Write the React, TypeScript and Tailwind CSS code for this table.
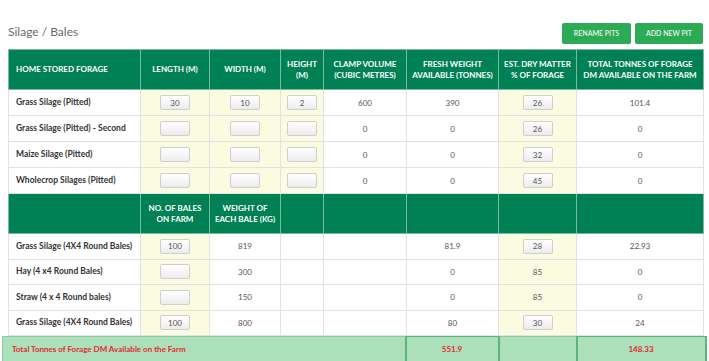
import React from "react"

const cols = [132, 69, 71, 43, 83, 92, 78, 127]

type Cell = { v?: string; input?: boolean; yellow?: boolean }

const pits: { label: string; cells: Cell[] }[] = [
  {
    label: "Grass Silage (Pitted)",
    cells: [
      { v: "30", input: true, yellow: true },
      { v: "10", input: true, yellow: true },
      { v: "2", input: true, yellow: true },
      { v: "600" },
      { v: "390" },
      { v: "26", input: true, yellow: true },
      { v: "101.4" },
    ],
  },
  {
    label: "Grass Silage (Pitted) - Second",
    cells: [
      { input: true, yellow: true },
      { input: true, yellow: true },
      { input: true, yellow: true },
      { v: "0" },
      { v: "0" },
      { v: "26", input: true, yellow: true },
      { v: "0" },
    ],
  },
  {
    label: "Maize Silage (Pitted)",
    cells: [
      { input: true, yellow: true },
      { input: true, yellow: true },
      { input: true, yellow: true },
      { v: "0" },
      { v: "0" },
      { v: "32", input: true, yellow: true },
      { v: "0" },
    ],
  },
  {
    label: "Wholecrop Silages (Pitted)",
    cells: [
      { input: true, yellow: true },
      { input: true, yellow: true },
      { input: true, yellow: true },
      { v: "0" },
      { v: "0" },
      { v: "45", input: true, yellow: true },
      { v: "0" },
    ],
  },
]

const bales: { label: string; cells: Cell[] }[] = [
  {
    label: "Grass Silage (4X4 Round Bales)",
    cells: [
      { v: "100", input: true, yellow: true },
      { v: "819" },
      {},
      {},
      { v: "81.9" },
      { v: "28", input: true, yellow: true },
      { v: "22.93" },
    ],
  },
  {
    label: "Hay (4 x4 Round Bales)",
    cells: [{ input: true, yellow: true }, { v: "300" }, {}, {}, { v: "0" }, { v: "85", yellow: true }, { v: "0" }],
  },
  {
    label: "Straw (4 x 4 Round bales)",
    cells: [{ input: true, yellow: true }, { v: "150" }, {}, {}, { v: "0" }, { v: "85", yellow: true }, { v: "0" }],
  },
  {
    label: "Grass Silage (4X4 Round Bales)",
    cells: [
      { v: "100", input: true, yellow: true },
      { v: "800" },
      {},
      {},
      { v: "80" },
      { v: "30", input: true, yellow: true },
      { v: "24" },
    ],
  },
]

function Box({ value }: { value?: string }) {
  return (
    <div className="mx-auto flex h-[15px] w-[30px] items-center justify-center rounded-[2px] border border-[#cfcfcf] bg-gradient-to-b from-white to-[#ececec] text-[8px] text-[#555]">
      {value}
    </div>
  )
}

function BodyRow({ label, cells, h }: { label: string; cells: Cell[]; h: string }) {
  return (
    <tr className={h}>
      <td className="border border-[#e2e2e2] bg-white pl-[7px] text-[8.5px] font-bold text-[#333]">{label}</td>
      {cells.map((c, i) => (
        <td
          key={i}
          className={`border border-[#e2e2e2] text-center text-[8px] text-[#555] ${c.yellow ? "bg-[#fbfbe1]" : "bg-white"}`}
        >
          {c.input ? <Box value={c.v} /> : c.v}
        </td>
      ))}
    </tr>
  )
}

function HeadCell({ children, left }: { children?: React.ReactNode; left?: boolean }) {
  return (
    <th
      className={`border border-[#7fb99a] bg-[#008055] px-1 text-[8px] font-bold leading-[11px] text-white ${left ? "pl-[7px] text-left" : "text-center"}`}
    >
      {children}
    </th>
  )
}

export default function App() {
  return (
    <div className="h-[361px] w-[709px] overflow-hidden bg-white font-['Lato','Liberation_Sans',sans-serif]">
      <div className="flex h-[49px] items-end justify-between pb-[5px] pl-2 pr-[6px]">
        <h1 className="mb-[6px] text-[12px] leading-none text-[#6a6a6a]">Silage / Bales</h1>
        <div className="flex gap-[4px]">
          <button className="h-[21px] w-[69px] rounded-[2px] bg-[#2daa55] text-[7px] font-semibold text-[#e8f5ec]">
            RENAME PITS
          </button>
          <button className="h-[21px] w-[68px] rounded-[2px] bg-[#2daa55] text-[7px] font-semibold text-[#e8f5ec]">
            ADD NEW PIT
          </button>
        </div>
      </div>

      <div className="pl-2">
        <table className="table-fixed border-collapse" style={{ width: 695 }}>
          <colgroup>
            {cols.map((w, i) => (
              <col key={i} style={{ width: w }} />
            ))}
          </colgroup>
          <thead>
            <tr className="h-[40px]">
              <HeadCell left>HOME STORED FORAGE</HeadCell>
              <HeadCell>LENGTH (M)</HeadCell>
              <HeadCell>WIDTH (M)</HeadCell>
              <HeadCell>HEIGHT (M)</HeadCell>
              <HeadCell>CLAMP VOLUME (CUBIC METRES)</HeadCell>
              <HeadCell>FRESH WEIGHT AVAILABLE (TONNES)</HeadCell>
              <HeadCell>EST. DRY MATTER % OF FORAGE</HeadCell>
              <HeadCell>TOTAL TONNES OF FORAGE DM AVAILABLE ON THE FARM</HeadCell>
            </tr>
          </thead>
          <tbody>
            {pits.map((r, i) => (
              <BodyRow key={i} label={r.label} cells={r.cells} h="h-[26px]" />
            ))}
            <tr className="h-[40px]">
              <HeadCell />
              <HeadCell>NO. OF BALES ON FARM</HeadCell>
              <HeadCell>WEIGHT OF EACH BALE (KG)</HeadCell>
              <HeadCell />
              <HeadCell />
              <HeadCell />
              <HeadCell />
              <HeadCell />
            </tr>
            {bales.map((r, i) => (
              <BodyRow key={i} label={r.label} cells={r.cells} h="h-[25.5px]" />
            ))}
          </tbody>
        </table>
      </div>

      <div className="pl-[2px]">
        <table className="table-fixed border-collapse" style={{ width: 703 }}>
          <colgroup>
            <col style={{ width: 403 }} />
            <col style={{ width: 93 }} />
            <col style={{ width: 78 }} />
            <col style={{ width: 129 }} />
          </colgroup>
          <tbody>
            <tr className="h-[25px] bg-[#ace0bb] text-[8px] font-bold text-[#e8262c]">
              <td className="border-y border-l border-[#8ccca0] pl-[9px]">Total Tonnes of Forage DM Available on the Farm</td>
              <td className="border-x-2 border-y border-[#5bb57b] text-center">551.9</td>
              <td className="border-y border-[#8ccca0]"></td>
              <td className="border-x-2 border-y border-[#5bb57b] text-center">148.33</td>
            </tr>
          </tbody>
        </table>
      </div>
    </div>
  )
}
